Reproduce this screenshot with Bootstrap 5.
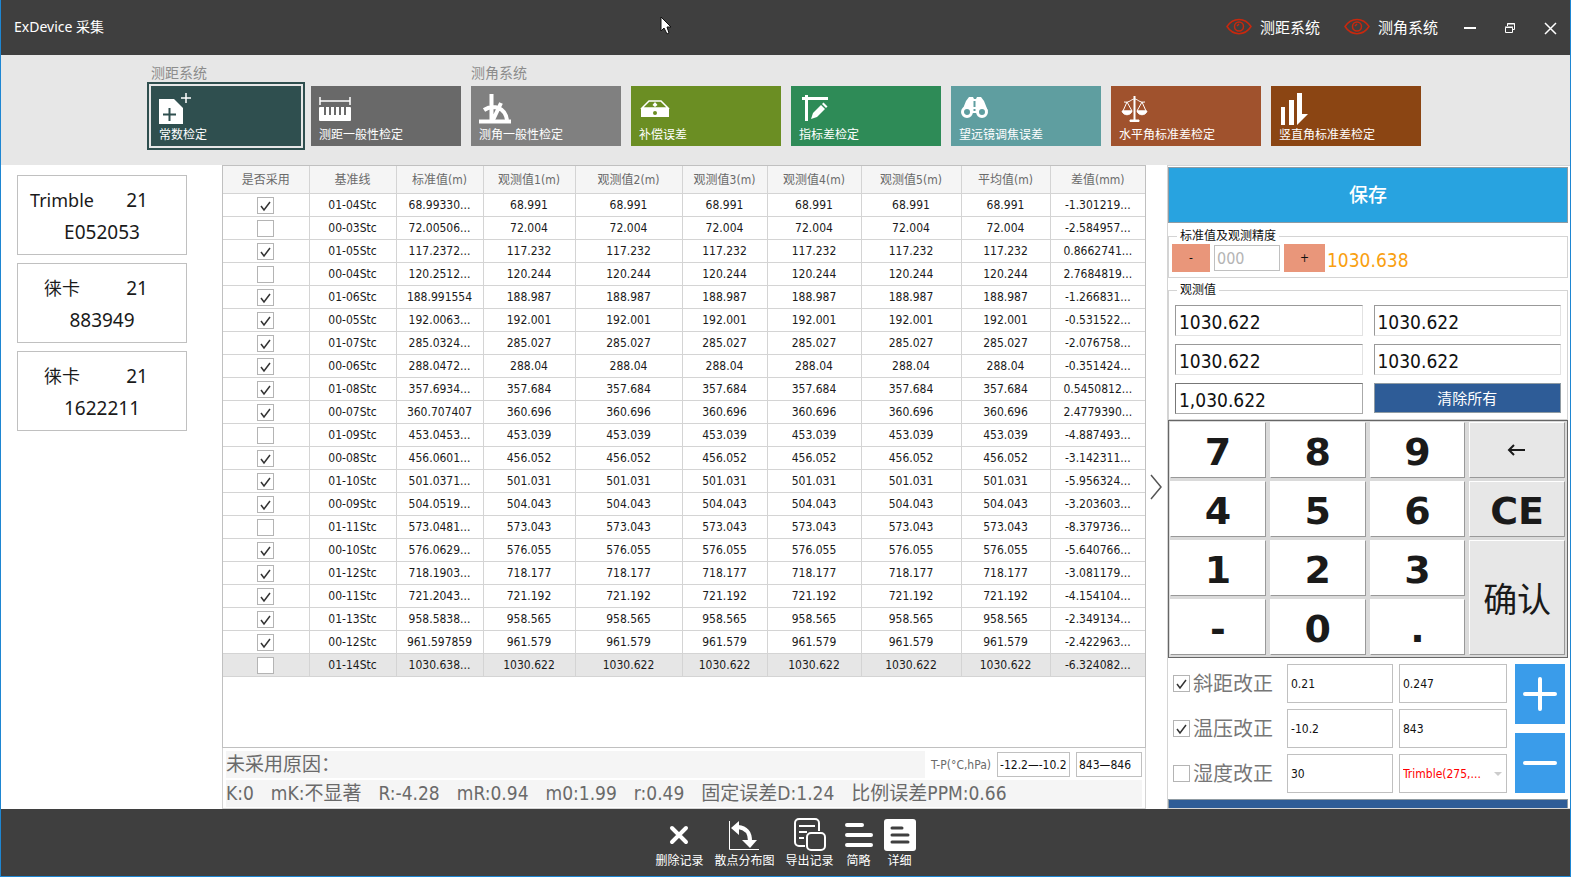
<!DOCTYPE html>
<html lang="zh-CN">
<head>
<meta charset="utf-8">
<meta name="viewport" content="width=device-width, initial-scale=1">
<title>ExDevice 采集</title>
<link href="https://cdn.jsdelivr.net/npm/bootstrap@5.3.0/dist/css/bootstrap.min.css" rel="stylesheet">
<style>
  :root { --chrome: #3f3f3f; --line: #c0c0c0; --grid: #d4d4d4; --accent: #1e86d2; }
  body { font: 12px/16px "DejaVu Sans Condensed", "Noto Sans", "Noto Sans CJK SC", sans-serif; color: #1a1a1a; }
  .ui-font { font-family: "Noto Sans", "Noto Sans CJK SC", sans-serif; }
  button, input, select { font-family: inherit; border-radius: 0; }
  .window { border: 1px solid var(--accent); border-top: 0; min-height: 100vh; height: 100vh; }
  .titlebar { background: var(--chrome); height: 55px; padding: 0 12px 2px 13px; font-size: 15px; }
  .titlebar .app-name { font-size: 14px; }
  .titlebar .btn-plain { font-size: 15px; line-height: 20px; }
  .btn-plain { background: none; border: 0; padding: 0; color: inherit; }
  .pointer { position: absolute; left: 42%; top: 16px; }

  .ribbon { background: #e7e7e7; height: 110px; padding: 8px 0 0 150px; }
  .ribbon h2 { font-size: 14px; line-height: 21px; margin: 0 0 2px; color: #8c8c8c; font-weight: 400; }
  .tile { width: 150px; height: 60px; border: 0; padding: 6px 8px 0; color: #fff; text-align: left; }
  .tile svg { display: block; }
  .tile span { display: block; line-height: 20px; }
  .tile.active { outline: 2px solid #2f4f4f; outline-offset: 2px; }

  .sidebar-pane { width: 221px; padding: 10px 35px 0 16px; }
  .device { border: 1px solid var(--line); height: 80px; background: #fff; font-size: 19px; line-height: 32px; padding: 8px 0; }
  .device .maker { width: 88px; font-size: 18px; }
  .device .model { width: 62px; }

  .grid-box { border: 1px solid var(--line); }
  .data-grid { table-layout: fixed; width: 100%; border-collapse: collapse; text-align: center; }
  .data-grid th { height: 27px; background: #f5f5f5; color: #6a6a6a; font-weight: 400; padding: 2px 0 0; border: 1px solid var(--grid); border-top: 0; }
  .data-grid td { height: 23px; padding: 0; border: 1px solid var(--grid); white-space: nowrap; overflow: hidden; }
  .data-grid th:first-child, .data-grid td:first-child { border-left: 0; }
  .data-grid th:last-child, .data-grid td:last-child { border-right: 0; }
  .data-grid tr.current td { background: #e6e6e6; }
  .tick { appearance: none; width: 17px; height: 17px; flex: none; margin: 0; border: 1px solid #b4b4b4; background: #fff center/15px no-repeat; display: block; }
  .tick:checked { background-image: url("data:image/svg+xml,%3Csvg xmlns='http://www.w3.org/2000/svg' viewBox='0 0 15 15'%3E%3Cpath d='M3 8l3 4 6-8' fill='none' stroke='%23333' stroke-width='1.5'/%3E%3C/svg%3E"); }
  .data-grid .tick { margin: 1px auto 0; }
  .status { border: 1px solid var(--grid); border-top: 0; padding: 3px 3px 1px; gap: 2px; font-size: 19px; color: #6a6a6a; }
  .status .strip { background: #f5f5f5; height: 27px; line-height: 27px; white-space: nowrap; }
  .status .strip.stats { gap: 17px; }
  .status label { font-size: 12px; padding: 0 6px; }
  .status input { height: 25px; font-size: 12px; color: #111; border: 1px solid var(--line); padding: 0 2px; }
  .temp { width: 73px; margin-right: 6px; }
  .press { width: 66px; }

  .splitter { width: 21px; }
  .entry { width: 403px; border: 1px solid var(--grid); border-right: 0; padding: 1px 2px 0 0; }
  .save { height: 56px; background: #28a3e0; border: 1px solid #8f9ba3; color: #fff; font-size: 19px; font-weight: 500; flex: none; }
  .group { border: 1px solid var(--grid); padding: 0 6px 5px 3px; margin: 4px 0 0; min-width: 0; }
  .save + .group { margin-top: 5px; }
  .group legend { float: none; width: auto; font-size: 12px; line-height: 16px; margin: 0 0 0 5px; padding: 0 3px; color: #111; }
  .step { background: #e9967a; border: 0; height: 28px; color: #111; }
  .step.minus { width: 38px; }
  .step.plus { width: 41px; }
  .digits { width: 66px; height: 26px; border: 1px solid var(--line); font-size: 16px; padding: 0 2px; }
  .digits::placeholder { color: #b4b4b4; opacity: 1; }
  .standard { font-size: 19px; line-height: 28px; padding: 2px 0 0 2px; margin-bottom: -2px; color: #f9a010; }
  .readings { display: grid; grid-template-columns: 1fr 1fr; gap: 8px 11px; padding: 7px 0 0 3px; }
  .readings input { width: 100%; min-width: 0; height: 31px; font-size: 19px; padding: 2px 3px 0; color: #111; border: 1px solid #e2e2e2; border-top-color: #999; border-left-color: #999; }
  .readings input.editing { border-color: #777 #aaa #aaa #777; }
  .clear { height: 30px; background: #2e5c97; border: 1px solid #8f9ba3; color: #fff; font-size: 15px; padding: 2px 0 0; }
  .keypad { display: grid; grid-template-columns: repeat(4, 1fr); grid-auto-rows: 56px; gap: 3px 4px; background: #dadada; border: 1px solid #666; padding: 1px 2px 0 1px; height: 238px; }
  .key { background: #fff; border: 1px solid #fff; border-right-color: #999; border-bottom-color: #999; padding: 4px 0 0; font-family: "DejaVu Sans", "Noto Sans CJK SC", sans-serif; font-size: 38px; font-weight: 700; line-height: 40px; color: #1a1a1a; }
  .key.fn { background: #e7e7e7; }
  .key svg { display: block; margin: 0 auto 4px; }
  .key.confirm { grid-row: span 2; font-size: 34px; font-weight: 400; }
  .corrections { display: grid; grid-template-columns: 108px 106px 108px; gap: 6px; padding-left: 5px; }
  .corrections label { font-size: 20px; line-height: 24px; color: #777; gap: 3px; }
  .corrections input[type=text], .corrections select { width: 100%; height: 39px; border: 1px solid var(--line); background: #fff; padding: 0 3px; color: #111; }
  .corrections select { appearance: none; color: #f00; background: #fff url("data:image/svg+xml,%3Csvg xmlns='http://www.w3.org/2000/svg' viewBox='0 0 8 4'%3E%3Cpath d='M0 0h8L4 4z' fill='%23ccc'/%3E%3C/svg%3E") right 4px center/8px 4px no-repeat; }
  .adjust { width: 50px; height: 60px; background: #3a9cea; border: 0; padding: 0; }
  .next { height: 55px; background: #2e5c97; border: 1px solid #8f9ba3; flex: none; margin-top: 6px; }

  .toolbar { background: var(--chrome); height: 67px; gap: 11px; padding-top: 9px; }
  .toolbar .btn-plain { line-height: 18px; }
  .toolbar svg { display: block; margin: 0 auto; }
</style>
</head>
<body>
<div class="window d-flex flex-column overflow-hidden">
  <header class="titlebar ui-font d-flex align-items-center text-white position-relative flex-shrink-0">
    <span class="app-name me-auto">ExDevice 采集</span>
    <svg class="pointer" width="12" height="19" viewBox="0 0 12 19" aria-hidden="true"><path d="M1 1v14l3-3 3 6 2-1-2-6h4z" fill="#fff" stroke="#111"/></svg>
    <button class="btn-plain d-flex align-items-center gap-2 me-4" type="button"><svg width="26" height="17" viewBox="0 0 26 17" fill="none" stroke="#c8280e" stroke-width="1.500"><path d="M1 8.500C7-1 19-1 25 8.500 19 18 7 18 1 8.500z"/><circle cx="13" cy="8.500" r="4.500"/><path d="M13 6l-2 2"/></svg>测距系统</button>
    <button class="btn-plain d-flex align-items-center gap-2 me-4" type="button"><svg width="26" height="17" viewBox="0 0 26 17" fill="none" stroke="#c8280e" stroke-width="1.500"><path d="M1 8.500C7-1 19-1 25 8.500 19 18 7 18 1 8.500z"/><circle cx="13" cy="8.500" r="4.500"/><path d="M13 6l-2 2"/></svg>测角系统</button>
    <div class="d-flex gap-4">
      <button class="btn-plain" type="button" aria-label="最小化"><svg width="16" height="16" viewBox="0 0 16 16"><path d="M2 8h12" stroke="#fff" stroke-width="2"/></svg></button>
      <button class="btn-plain" type="button" aria-label="还原"><svg width="16" height="16" viewBox="0 0 16 16" fill="none" stroke="#fff"><path d="M3.500 7.500h7v5h-7zM3 7h8M5.500 6V3.500h7v6H11M5 4h8"/></svg></button>
      <button class="btn-plain" type="button" aria-label="关闭"><svg width="16" height="16" viewBox="0 0 16 16"><path d="M3 3l11 11M14 3L3 14" stroke="#fff" stroke-width="1.500"/></svg></button>
    </div>
  </header>

  <nav class="ribbon d-flex flex-shrink-0" aria-label="检定项目" style="gap:10px">
    <section>
      <h2>测距系统</h2>
      <div class="d-flex" style="gap:10px">
        <button class="tile active" type="button" style="background:#2f4f4f"><svg width="32" height="32" fill="#fff"><path d="M0 6h15l9 9v16H0z"/><path d="M10.500 15v13M4 21.500h13" stroke="#2f4f4f" stroke-width="2"/><path d="M27 0v10M22 5h10" stroke="#fff" stroke-width="1.500"/></svg><span>常数检定</span></button>
        <button class="tile" type="button" style="background:#696969"><svg width="32" height="32"><path d="M1 4v8M31 4v8M1 8h30" stroke="#fff" stroke-width="1.500"/><rect y="14" width="32" height="14" rx="1" fill="#fff"/><path d="M6 14v8M11 14v8M16 14v8M21 14v8M26 14v8" stroke="#696969" stroke-width="2"/></svg><span>测距一般性检定</span></button>
      </div>
    </section>
    <section>
      <h2>测角系统</h2>
      <div class="d-flex" style="gap:10px">
        <button class="tile" type="button" style="background:#808080"><svg width="32" height="32" fill="none" stroke="#fff" stroke-width="3"><path d="M0 28.500h32" stroke-width="4"/><path d="M12.500 1v27M14 27l8-17M5 17c9-6 21-3 23 10" stroke-width="4"/></svg><span>测角一般性检定</span></button>
        <button class="tile" type="button" style="background:#6b8e23"><svg width="32" height="32"><path d="M3 15l7-7h12l7 7z" fill="none" stroke="#fff" stroke-width="1.500"/><path d="M2 15h28v9H2z" fill="#fff"/><path d="M16 9l2.500 3-2.500 2-2.500-2z" fill="#fff"/><circle cx="16" cy="20" r="2" fill="#6b8e23"/></svg><span>补偿误差</span></button>
        <button class="tile" type="button" style="background:#2e8b57"><svg width="32" height="32" fill="#fff"><path d="M3 4h26v3H3zM6 2h3v26H6z"/><path d="M12 26l2-6 8-8 4 4-8 8zM23 11l1.500-1.500 4 4L27 15z"/></svg><span>指标差检定</span></button>
        <button class="tile" type="button" style="background:#5f9ea0"><svg width="32" height="32"><path d="M7 8l3-4h4l1 2h2l1-2h4l3 4 4 10-6-2-4 4h-6l-4-4-6 2z" fill="#fff"/><circle cx="8" cy="19" r="4.500" fill="#5f9ea0" stroke="#fff" stroke-width="3"/><circle cx="23" cy="19" r="4.500" fill="#5f9ea0" stroke="#fff" stroke-width="3"/><path d="M15.500 8v6M15.500 16v2" stroke="#5f9ea0" stroke-width="2"/></svg><span>望远镜调焦误差</span></button>
        <button class="tile" type="button" style="background:#a0522d"><svg width="32" height="32" fill="none" stroke="#fff"><path d="M15.500 3v25" stroke-width="2"/><path d="M5 9c6 1 7-3 10.500-3S20 10 26 9M8 9L4 18h9L8 9M23 9l-5 9h9l-4-9"/><path d="M3 18h10c-1 5-9 5-10 0zM18 18h10c-1 5-9 5-10 0zM11 27h9v1.500h-9z" fill="#fff"/></svg><span>水平角标准差检定</span></button>
        <button class="tile" type="button" style="background:#8b4513"><svg width="32" height="32" fill="#fff"><path d="M2 14h4v18H2zM10 7h5v25h-5zM18 0h5v21h6L18 32z"/></svg><span>竖直角标准差检定</span></button>
      </div>
    </section>
  </nav>

  <main class="d-flex flex-grow-1 overflow-hidden" style="min-height:0">
    <aside class="sidebar-pane ui-font d-flex flex-column gap-2 flex-shrink-0">
      <div class="device text-center"><div class="d-flex"><span class="maker">Trimble</span><span class="model">21</span></div><div>E052053</div></div>
      <div class="device text-center"><div class="d-flex"><span class="maker">徕卡</span><span class="model">21</span></div><div>883949</div></div>
      <div class="device text-center"><div class="d-flex"><span class="maker">徕卡</span><span class="model">21</span></div><div>1622211</div></div>
    </aside>

    <section class="d-flex flex-column flex-grow-1" style="min-width:0">
      <div class="grid-box flex-grow-1 overflow-hidden">
        <table class="data-grid">
          <colgroup><col width="86"><col width="87"><col width="87"><col width="92"><col width="107"><col width="85"><col width="94"><col width="100"><col width="89"><col width="95"></colgroup>
          <thead><tr><th>是否采用</th><th>基准线</th><th>标准值(m)</th><th>观测值1(m)</th><th>观测值2(m)</th><th>观测值3(m)</th><th>观测值4(m)</th><th>观测值5(m)</th><th>平均值(m)</th><th>差值(mm)</th></tr></thead>
          <tbody id="records"></tbody>
        </table>
      </div>
      <div class="status d-flex flex-column flex-shrink-0">
        <div class="d-flex align-items-center">
          <div class="strip flex-grow-1">未采用原因：</div>
          <label for="temp">T-P(°C,hPa)</label>
          <input class="temp" id="temp" type="text" value="-12.2—-10.2">
          <input class="press" type="text" value="843—846" aria-label="气压">
        </div>
        <div class="strip stats d-flex"><span>K:0</span><span>mK:不显著</span><span>R:-4.28</span><span>mR:0.94</span><span>m0:1.99</span><span>r:0.49</span><span>固定误差D:1.24</span><span>比例误差PPM:0.66</span></div>
      </div>
    </section>

    <div class="splitter d-flex align-items-center justify-content-center flex-shrink-0">
      <button class="btn-plain" type="button" aria-label="收起"><svg width="14" height="26" viewBox="0 0 14 26"><path d="M1 1l10 12L1 25" fill="none" stroke="#555" stroke-width="1.500"/></svg></button>
    </div>

    <section class="entry d-flex flex-column flex-shrink-0 overflow-hidden">
      <button class="save" type="button">保存</button>
      <fieldset class="group">
        <legend>标准值及观测精度</legend>
        <div class="d-flex align-items-center">
          <button class="step minus" type="button">-</button>
          <input class="digits mx-1" type="text" placeholder="000" aria-label="精度">
          <button class="step plus" type="button">+</button>
          <span class="standard">1030.638</span>
        </div>
      </fieldset>
      <fieldset class="group">
        <legend>观测值</legend>
        <div class="readings">
          <input type="text" value="1030.622" aria-label="观测值1"><input type="text" value="1030.622" aria-label="观测值2">
          <input type="text" value="1030.622" aria-label="观测值3"><input type="text" value="1030.622" aria-label="观测值4">
          <input class="editing" type="text" value="1,030.622" aria-label="观测值5"><button class="clear" type="button">清除所有</button>
        </div>
      </fieldset>
      <div class="keypad flex-shrink-0">
        <button class="key" type="button">7</button><button class="key" type="button">8</button><button class="key" type="button">9</button>
        <button class="key fn" type="button" aria-label="退格"><svg width="20" height="14" viewBox="0 0 20 14"><path d="M18 7H2M7 2L2 7l5 5" fill="none" stroke="#1a1a1a" stroke-width="2"/></svg></button>
        <button class="key" type="button">4</button><button class="key" type="button">5</button><button class="key" type="button">6</button><button class="key fn" type="button">CE</button>
        <button class="key" type="button">1</button><button class="key" type="button">2</button><button class="key" type="button">3</button><button class="key fn confirm" type="button">确认</button>
        <button class="key" type="button">-</button><button class="key" type="button">0</button><button class="key" type="button">.</button>
      </div>
      <div class="d-flex justify-content-between flex-shrink-0" style="padding:6px 3px 0 0">
        <div class="corrections">
          <label class="d-flex align-items-center"><input class="tick" type="checkbox" checked>斜距改正</label>
          <input type="text" value="0.21" aria-label="斜距1"><input type="text" value="0.247" aria-label="斜距2">
          <label class="d-flex align-items-center"><input class="tick" type="checkbox" checked>温压改正</label>
          <input type="text" value="-10.2" aria-label="温度"><input type="text" value="843" aria-label="气压值">
          <label class="d-flex align-items-center"><input class="tick" type="checkbox">湿度改正</label>
          <input type="text" value="30" aria-label="湿度"><select aria-label="仪器"><option>Trimble(275,...</option></select>
        </div>
        <div class="d-flex flex-column justify-content-between">
          <button class="adjust" type="button" aria-label="增加"><svg width="34" height="34"><path d="M17 2v30M2 17h30" stroke="#fff" stroke-width="4" stroke-linecap="round"/></svg></button>
          <button class="adjust" type="button" aria-label="减少"><svg width="34" height="34"><path d="M2 17h30" stroke="#fff" stroke-width="4" stroke-linecap="round"/></svg></button>
        </div>
      </div>
      <button class="next" type="button" aria-label="下一步"></button>
    </section>
  </main>

  <footer class="toolbar d-flex justify-content-center align-items-start text-white flex-shrink-0">
    <button class="btn-plain" type="button"><svg width="32" height="34"><path d="M9 10l14 14M23 10L9 24" stroke="#fff" stroke-width="4" stroke-linecap="round"/></svg>删除记录</button>
    <button class="btn-plain" type="button"><svg width="32" height="34" fill="none"><path d="M1.500 3v28.500H31" stroke="#fff"/><path d="M10 9c10 1 12 8 12 14" stroke="#fff" stroke-width="4"/><path d="M3 10l8-7v14zM14 22h15l-7 8z" fill="#fff"/></svg>散点分布图</button>
    <button class="btn-plain" type="button"><svg width="32" height="34" fill="none" stroke="#fff" stroke-width="2"><path d="M25 13V5a4 4 0 0 0-4-4H5a4 4 0 0 0-4 4v19a4 4 0 0 0 4 4h6M5 8h16M5 14h8M5 20h5"/><rect x="13" y="15" width="18" height="17" rx="4"/></svg>导出记录</button>
    <button class="btn-plain" type="button"><svg width="28" height="34" stroke="#fff" stroke-width="4" stroke-linecap="round"><path d="M2 7h15M2 17h24M2 27h24"/></svg>简略</button>
    <button class="btn-plain" type="button"><svg width="32" height="34"><rect y="1" width="32" height="32" rx="3" fill="#fff"/><path d="M8 10h10M8 17h16M8 24h16" stroke="#3f3f3f" stroke-width="3" stroke-linecap="round"/></svg>详细</button>
  </footer>
</div>
<script>
  // adopted, baseline, standard value, observed value (all five readings and the mean agree), difference
  const records = [
    [1,'01-04Stc','68.99330...','68.991','-1.301219...'],
    [0,'00-03Stc','72.00506...','72.004','-2.584957...'],
    [1,'01-05Stc','117.2372...','117.232','0.8662741...'],
    [0,'00-04Stc','120.2512...','120.244','2.7684819...'],
    [1,'01-06Stc','188.991554','188.987','-1.266831...'],
    [1,'00-05Stc','192.0063...','192.001','-0.531522...'],
    [1,'01-07Stc','285.0324...','285.027','-2.076758...'],
    [1,'00-06Stc','288.0472...','288.04','-0.351424...'],
    [1,'01-08Stc','357.6934...','357.684','0.5450812...'],
    [1,'00-07Stc','360.707407','360.696','2.4779390...'],
    [0,'01-09Stc','453.0453...','453.039','-4.887493...'],
    [1,'00-08Stc','456.0601...','456.052','-3.142311...'],
    [1,'01-10Stc','501.0371...','501.031','-5.956324...'],
    [1,'00-09Stc','504.0519...','504.043','-3.203603...'],
    [0,'01-11Stc','573.0481...','573.043','-8.379736...'],
    [1,'00-10Stc','576.0629...','576.055','-5.640766...'],
    [1,'01-12Stc','718.1903...','718.177','-3.081179...'],
    [1,'00-11Stc','721.2043...','721.192','-4.154104...'],
    [1,'01-13Stc','958.5838...','958.565','-2.349134...'],
    [1,'00-12Stc','961.597859','961.579','-2.422963...'],
    [0,'01-14Stc','1030.638...','1030.622','-6.324082...']
  ];
  document.getElementById('records').innerHTML = records.map(([used, line, std, obs, diff], i) =>
    `<tr${i === records.length - 1 ? ' class="current"' : ''}><td><input class="tick" type="checkbox" aria-label="${line}"${used ? ' checked' : ''}></td>` +
    [line, std, obs, obs, obs, obs, obs, obs, diff].map(v => `<td>${v}</td>`).join('') + '</tr>').join('');
</script>
<script src="https://cdn.jsdelivr.net/npm/bootstrap@5.3.0/dist/js/bootstrap.bundle.min.js"></script>
</body>
</html>
